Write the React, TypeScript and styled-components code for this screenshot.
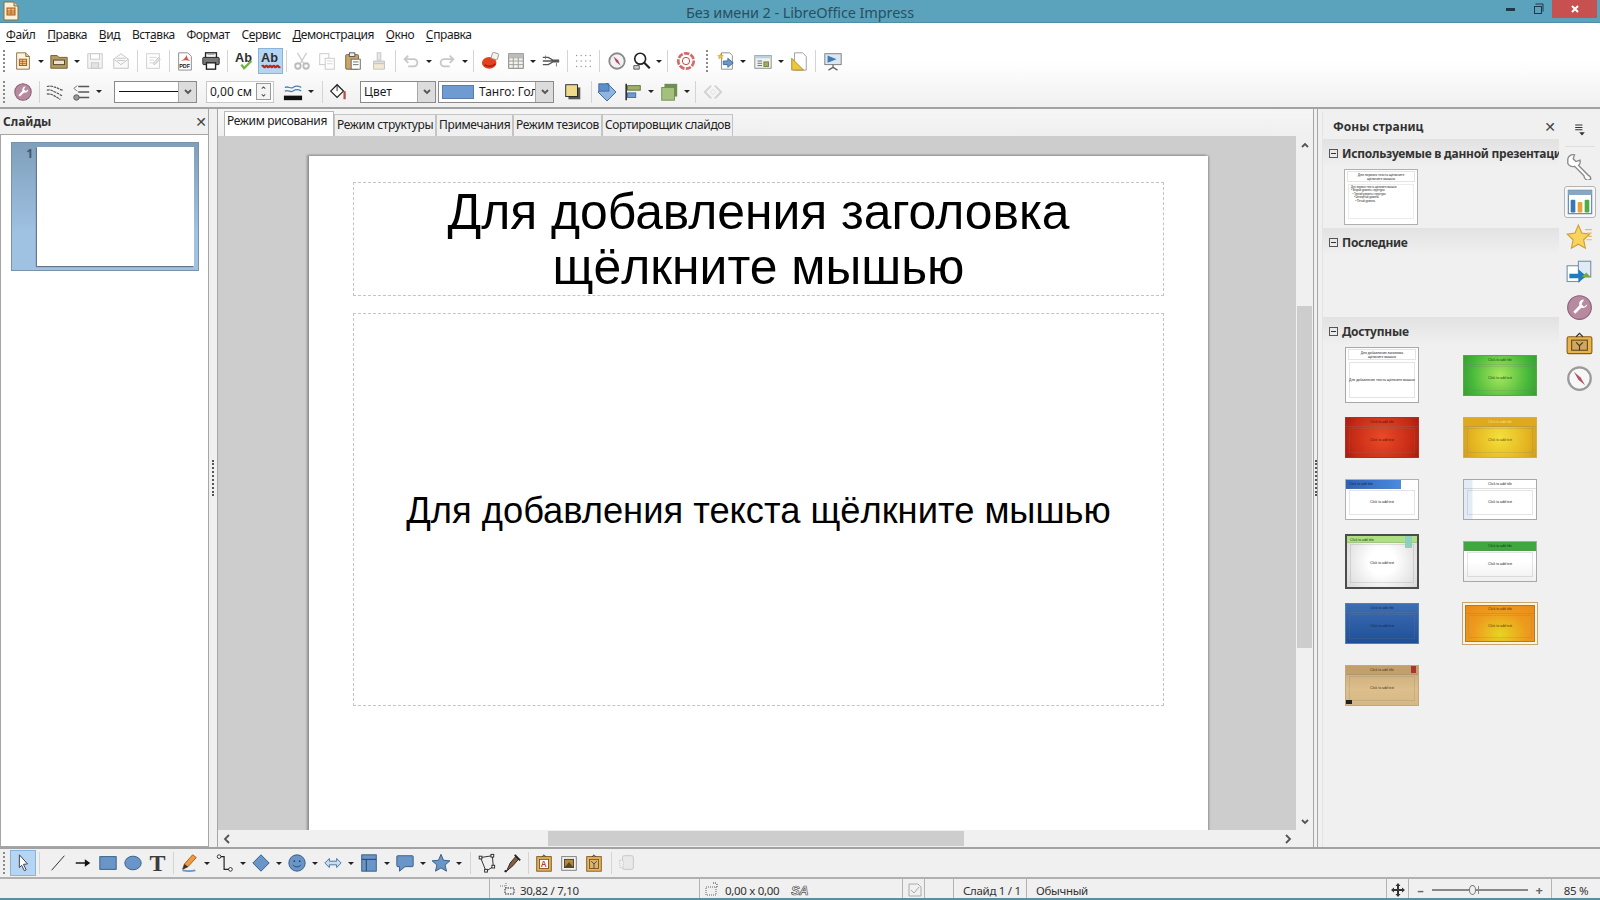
import React from "react";
import styled, { createGlobalStyle } from "styled-components";

const Global = createGlobalStyle`
  html, body { margin: 0; padding: 0; background: #f0f0f0; }
  #root { width: 1600px; height: 900px; overflow: hidden; }
  * { box-sizing: border-box; }
`;

const UI = `"Noto Sans", "Open Sans", "Liberation Sans", sans-serif`;

const Window = styled.div`
  width: 1600px; height: 900px; display: flex; flex-direction: column;
  font-family: ${UI}; font-size: 12px; color: #1c1c1c; background: #f0f0f0;
  border-bottom: 2px solid #5a8ea3;
`;
const TitleBar = styled.div`
  height: 23px; flex: none; background: #5ba3bd; border-bottom: 1px solid #4d8ea6;
  display: flex; align-items: flex-start; justify-content: space-between; position: relative;
`;
const AppIcon = styled.div` width: 22px; height: 22px; padding: 1px 0 0 1px; `;
const WindowTitle = styled.div`
  position: absolute; left: 0; right: 0; top: 2px; text-align: center;
  font-size: 14.5px; line-height: 20px; color: #28505f; letter-spacing: -0.1px;
`;
const WinButtons = styled.div` display: flex; align-items: flex-start; `;
const WinBtn = styled.div<{ $w: number; $close?: boolean }>`
  width: ${p => p.$w}px; height: 18px; display: flex; align-items: center; justify-content: center;
  background: ${p => (p.$close ? "#c75050" : "transparent")}; margin-right: ${p => (p.$close ? 3 : 0)}px;
`;
const Chrome = styled.div`
  flex: none; height: 86px; background: linear-gradient(#fff 0%, #fff 45%, #f0f0f0 100%);
  border-bottom: 2px solid #a2a2a2;
`;
const MenuBar = styled.div` height: 23px; display: flex; align-items: center; padding-left: 6px; gap: 11.75px; font-size: 12px; `;
const MenuItem = styled.span` white-space: nowrap; letter-spacing: -0.4px; `;
const MenuKey = styled.span` text-decoration: underline; text-underline-offset: 2px; `;
const ToolRow = styled.div<{ $h?: number }>` height: ${p => p.$h ?? 30}px; display: flex; align-items: center; `;
const Grip = styled.div`
  width: 10px; height: 22px; flex: none; display: flex; justify-content: flex-start; padding-left: 3px;
  &::before { content: ""; height: 100%; border-left: 2px dotted #8a8a8a; }
`;
const Tool = styled.div<{ $w?: number; $on?: boolean }>`
  width: ${p => p.$w ?? 26}px; height: 26px; flex: none; display: flex; align-items: center; justify-content: center;
  ${p => p.$on && "background: #b5d5f2; border: 1px solid #86b4dc;"}
`;
const ArrowCell = styled.div`
  width: 10px; flex: none; display: flex; justify-content: center;
  &::before { content: ""; border-left: 3px solid transparent; border-right: 3px solid transparent; border-top: 3px solid #222; }
`;
const SepLine = styled.div`
  width: 6px; height: 22px; flex: none; display: flex; justify-content: center;
  &::before { content: ""; border-left: 1px solid #d4d4d4; }
`;
const Gap = styled.div<{ $w: number }>` width: ${p => p.$w}px; flex: none; `;
const Combo = styled.div<{ $w: number }>`
  width: ${p => p.$w}px; height: 22px; flex: none; background: #fff; border: 1px solid #8a8a8a;
  display: flex; align-items: center; overflow: hidden;
`;
const ComboValue = styled.div`
  flex: 1; min-width: 0; padding-left: 3px; font-size: 12px; white-space: nowrap; overflow: hidden; display: flex; align-items: center; gap: 5px;
`;
const LineSample = styled.div` flex: 1; height: 1px; background: #111; margin-left: 1px; `;
const Swatch = styled.div` width: 32px; height: 14px; background: #6f9bd3; border: 1px solid #5a7ca8; flex: none; `;
const ComboBtn = styled.div`
  width: 18px; height: 100%; flex: none; background: #dcdcdc; border-left: 1px solid #a8a8a8;
  display: flex; align-items: center; justify-content: center;
`;
const SpinBox = styled(Combo)` background: #fff; border-color: #c8c8c8; `;
const SpinBtns = styled.div`
  width: 15px; height: 17px; border: 1px solid #9a9a9a; margin-right: 2px; flex: none;
  display: flex; flex-direction: column; align-items: center; justify-content: space-around; background: #f4f4f4;
`;

const Main = styled.div` flex: 1; min-height: 0; display: flex; border-bottom: 2px solid #a2a2a2; `;
const SlidesPanel = styled.div` width: 208px; flex: none; display: flex; flex-direction: column; background: #f0f0f0; `;
const PanelHead = styled.div`
  height: 25px; flex: none; display: flex; align-items: center; justify-content: space-between; padding: 0 1px 0 3px;
  font-weight: 700; font-size: 12px; color: #333;
`;
const CloseX = styled.span` font-size: 14px; font-weight: 700; color: #444; line-height: 1; font-family: "DejaVu Sans", sans-serif; `;
const SlideList = styled.div`
  flex: 1; background: #fff; border: 1px solid #a6a6a6; border-right: none; padding: 7px 0 0 10px;
`;
const SlideCard = styled.div`
  width: 188px; height: 129px; display: flex; padding: 4px 4px 4px 0; border: 1px solid #7b93a9;
  background: linear-gradient(#7f9fbb, #9fc1e2 70%);
`;
const SlideNum = styled.div` width: 25px; flex: none; text-align: right; padding-right: 4px; font-weight: 700; color: #44586a; line-height: 14px; `;
const SlidePreview = styled.div` flex: 1; background: #fff; box-shadow: -1px 1px 1px #65788a; `;
const Splitter = styled.div<{ $w: number }>`
  width: ${p => p.$w}px; flex: none; display: flex; align-items: center; justify-content: center;
  background: #f0f0f0; border-left: 1px solid #a6a6a6; border-right: 1px solid #a6a6a6;
`;
const SplitDots = styled.div` height: 36px; border-left: 2px dotted #555; `;
const Workspace = styled.div` flex: 1; min-width: 0; display: flex; flex-direction: column; `;
const TabBar = styled.div` height: 27px; flex: none; display: flex; align-items: flex-end; padding-left: 6px; background: linear-gradient(#f6f6f6, #efefef); `;
const Tab = styled.div<{ $w: number; $on?: boolean }>`
  width: ${p => p.$w}px; height: ${p => (p.$on ? 25 : 22)}px; flex: none; text-align: left; padding-left: 2px; white-space: nowrap; overflow: hidden;
  font-size: 12px; letter-spacing: -0.35px; line-height: ${p => (p.$on ? 18 : 20)}px; color: #222;
  background: ${p => (p.$on ? "#fff" : "#f0f0f0")};
  border: 1px solid ${p => (p.$on ? "#b8b8b8" : "#c4c4c4")}; border-bottom: none;
`;
const WorkRow = styled.div` flex: 1; min-height: 0; display: flex; `;
const Canvas = styled.div` flex: 1; min-width: 0; background: #cdcdcd; padding: 20px 0 0 91px; overflow: hidden; `;
const Slide = styled.div`
  width: 899px; height: 700px; background: #fff; box-shadow: -2px -1px 2px #8e8e8e, 1px 0 2px #8e8e8e;
  padding: 26px 44px 0; display: flex; flex-direction: column; gap: 17px;
`;
const TitleHolder = styled.div`
  height: 114px; flex: none; border: 1px dashed #c4c4c4; font-family: "Liberation Sans", Arial, sans-serif; font-size: 49.8px;
  line-height: 55px; text-align: center; color: #000; padding-top: 2px; white-space: nowrap;
`;
const BodyHolder = styled.div`
  height: 393px; flex: none; border: 1px dashed #c4c4c4; font-family: "Liberation Sans", Arial, sans-serif; font-size: 36.3px;
  padding-top: 2px; display: flex; align-items: center; justify-content: center; color: #000; white-space: nowrap;
`;
const VScroll = styled.div` width: 17px; flex: none; background: #f0f0f0; display: flex; flex-direction: column; align-items: center; padding-top: 3px; `;
const VThumb = styled.div` width: 15px; height: 342px; flex: none; background: #cdcdcd; margin-top: 155px; `;
const VBottom = styled.div` margin-top: auto; padding-bottom: 2px; display: flex; `;
const HScrollRow = styled.div` height: 17px; flex: none; display: flex; align-items: center; background: #f0f0f0; padding-left: 3px; `;
const HThumb = styled.div` width: 416px; height: 15px; background: #cdcdcd; margin-left: 315px; `;
const HRight = styled.div` margin-left: 318px; display: flex; `;

const TaskPanel = styled.div` width: 237px; flex: none; margin-top: 3px; display: flex; flex-direction: column; background: #f0f0f0; border-left: 1px solid #e4e4e4; overflow: hidden; `;
const TaskHead = styled.div` height: 27px; flex: none; display: flex; align-items: center; justify-content: space-between; padding: 2px 3px 0 10px; font-weight: 700; color: #333; `;
const SectionHead = styled.div`
  height: 28px; flex: none; display: flex; align-items: center; gap: 4px; padding-left: 6px;
  font-weight: 700; font-size: 12px; color: #333; white-space: nowrap; letter-spacing: -0.25px;
  background: linear-gradient(#e2e2e2, #f0f0f0);
`;
const MinusBox = styled.span`
  width: 9px; height: 9px; flex: none; border: 1px solid #555; display: flex; align-items: center; justify-content: center;
  &::before { content: ""; width: 5px; height: 1px; background: #333; }
`;
const SectionBody = styled.div<{ $h: number }>` height: ${p => p.$h}px; flex: none; `;
const ThumbGrid = styled.div`
  display: grid; grid-template-columns: 74px 74px; column-gap: 44px; grid-auto-rows: 62px; align-items: center;
  padding-left: 22px; margin-top: -1px;
`;
const Mini = styled.div<{ $h?: number; $bg: string; $edge?: string; $color?: string; $frame?: string; $ring?: string }>`
  width: 74px; height: ${p => p.$h ?? 41}px; background: ${p => p.$bg}; border: ${p => p.$frame ?? `1px solid ${p.$edge ?? "#a8a8a8"}`};
  color: ${p => p.$color ?? "#222"}; display: flex; flex-direction: column; overflow: hidden; position: relative;
  ${p => p.$ring && `box-shadow: inset 0 0 0 1px ${p.$ring}, 0 0 0 1px #c9a56e;`}
  font-family: "Liberation Sans", sans-serif; font-size: 3.4px; line-height: 4px; text-align: center;
`;
const MiniTitle = styled.div<{ $bg?: string; $w?: string; $left?: boolean; $color?: string; $h?: number }>`
  flex: none; width: ${p => p.$w ?? "100%"}; height: ${p => p.$h ?? 9}px; background: ${p => p.$bg ?? "transparent"};
  color: ${p => p.$color ?? "inherit"}; text-align: ${p => (p.$left ? "left" : "center")}; padding: 2px ${p => (p.$left ? "3px" : "0")} 0;
  overflow: hidden; border-bottom: 1px solid rgba(120,120,120,.25); white-space: nowrap;
`;
const MiniBody = styled.div`
  flex: 1; display: flex; align-items: center; justify-content: center; margin: 1px 3px 4px; white-space: nowrap;
  border: 1px solid rgba(120,120,120,.2);
`;
const MiniList = styled.div` flex: 1; margin: 1px 3px 5px; border: 1px solid rgba(120,120,120,.14); text-align: left; padding: 1px 2px; font-size: 2.6px; line-height: 3.4px; `;
const SmallTitle = styled.div` flex: none; height: 11px; padding-top: 1px; white-space: pre-line; line-height: 4px; border: 1px solid rgba(120,120,120,.2); margin: 1px 2px 1px; `;
const UsedRow = styled.div` padding: 2px 0 0 21px; `;
const MiniMark = styled.div<{ $c: string; $w: number; $h: number; $r?: number; $b?: number; $l?: number; $t?: number }>`
  position: absolute; width: ${p => p.$w}px; height: ${p => p.$h}px; background: ${p => p.$c};
  ${p => p.$r !== undefined && `right: ${p.$r}px;`} ${p => p.$l !== undefined && `left: ${p.$l}px;`}
  ${p => p.$t !== undefined && `top: ${p.$t}px;`} ${p => p.$b !== undefined && `bottom: ${p.$b}px;`}
`;

const SideTabs = styled.div` width: 41px; flex: none; display: flex; flex-direction: column; align-items: center; margin-top: 3px; background: #f0f0f0; `;
const SideTop = styled.div` height: 35px; width: 30px; flex: none; display: flex; align-items: center; justify-content: center; border-bottom: 1px solid #dedede; `;
const SideTab = styled.div<{ $on?: boolean }>`
  width: 32px; height: 32px; margin-top: 3.4px; flex: none; display: flex; align-items: center; justify-content: center;
  ${p => p.$on && "background: #f8f8f8; border: 1px solid #b4b4b4; border-radius: 3px;"}
`;

const BottomBar = styled.div` height: 30px; flex: none; display: flex; align-items: center; background: #f0f0f0; border-bottom: 2px solid #b0b0b0; `;
const StatusBar = styled.div` height: 19px; flex: none; display: flex; align-items: stretch; font-size: 11.5px; letter-spacing: -0.3px; color: #333; background: #f0f0f0; `;
const StatusCell = styled.div<{ $w: number; $c?: boolean; $line?: boolean; $pad?: number }>`
  width: ${p => p.$w}px; flex: none; display: flex; align-items: center; gap: 5px; white-space: nowrap; padding-top: 3px;
  padding-left: ${p => (p.$c ? 0 : p.$pad ?? 9)}px; justify-content: ${p => (p.$c ? "center" : "flex-start")};
  border-right: ${p => (p.$line === false ? "none" : "1px solid #b4b4b4")};
`;
const ZoomTrack = styled.div` width: 96px; height: 2px; background: #888; position: relative; margin: 0 3px; `;
const ZoomKnob = styled.div`
  position: absolute; left: 37px; top: -4px; width: 7px; height: 10px; border-radius: 50%; background: #f0f0f0; border: 1px solid #777;
`;
const ZoomTick = styled.div` position: absolute; left: 46px; top: -3px; width: 1px; height: 8px; background: #888; `;
const ZoomSign = styled.span` color: #666; font-size: 13px; line-height: 1; font-weight: 700; `;

const Svg: React.FC<{ s?: number; vb?: number; dim?: boolean; children: React.ReactNode }> = ({ s = 22, vb = 22, dim, children }) => (
  <svg width={s} height={s} viewBox={`0 0 ${vb} ${vb}`} opacity={dim ? 0.32 : 1} fill="none">{children}</svg>
);

const txt = { fontFamily: "Liberation Sans, sans-serif", fontWeight: 700 } as const;

const P: Record<string, React.ReactNode> = {
  newdoc: <><path d="M4 2h10l4 4v14H4z" fill="#fdf4e2" stroke="#8a6a3c" /><path d="M14 2v4h4" fill="#e6cfa2" stroke="#8a6a3c" /><rect x="7" y="9" width="8" height="7" fill="#f3c27a" stroke="#a4561c" /><path d="M7 11.5h8M7 13.8h8M10.5 9v7" stroke="#a4561c" strokeWidth=".7" /></>,
  open: <><path d="M2 5h7l2 2h9v12H2z" fill="#b59a62" stroke="#6f5a2e" /><rect x="5" y="10" width="12" height="5" fill="#ece3cc" stroke="#4f4224" /></>,
  save: <><path d="M3 3h16v16H3z" fill="#dfdfdf" stroke="#555" /><rect x="6" y="3" width="10" height="6" fill="#fff" stroke="#555" /><rect x="7" y="13" width="8" height="6" fill="#aaa" stroke="#555" /></>,
  mail: <><path d="M3 9l8-6 8 6v10H3z" fill="#f1f1f1" stroke="#444" /><path d="M3 9l8 6 8-6M6 8h10M7 10.5h8" stroke="#444" /></>,
  edit: <><rect x="4" y="3" width="14" height="16" fill="#fff" stroke="#666" /><path d="M7 7h8M7 10h5M7 13h4" stroke="#777" /><path d="M11 14l6-7 2 2-6 6z" fill="#aaa" stroke="#555" /></>,
  pdf: <><path d="M4 2h10l4 4v15H4z" fill="#fff" stroke="#888" /><path d="M6 11c3-1 5-3 7-7 0 3 1 5 4 7-4-1-7-1-11 0z" fill="#d4574a" /><text x="4.6" y="19" fontSize="6" fill="#222" style={txt}>PDF</text></>,
  print: <><rect x="5" y="2" width="12" height="6" fill="#fff" stroke="#222" strokeWidth="1.5" /><rect x="2" y="7" width="18" height="8" rx="1" fill="#777" stroke="#222" /><rect x="6" y="13" width="10" height="7" fill="#fff" stroke="#222" strokeWidth="1.5" /><path d="M7 4h8" stroke="#999" /></>,
  spell: <><text x="0" y="12.5" fontSize="14" fill="#2f2f2f" style={txt}>Ab</text><path d="M7 15l3 4 8-8" stroke="#6cb83a" strokeWidth="2.6" /></>,
  auto: <><text x="0" y="12.5" fontSize="14" fill="#2f2f2f" style={txt}>Ab</text><path d="M1 17c2-2.5 2 2.5 4 0s2 2.5 4 0 2 2.5 4 0 2 2.5 4 0 2 2.5 4 0" stroke="#c0241c" strokeWidth="2.4" /></>,
  cut: <><path d="M6 2l7 12M16 2L9 14" stroke="#666" strokeWidth="1.5" /><circle cx="6.5" cy="16.5" r="3" stroke="#333" strokeWidth="2" /><circle cx="15.5" cy="16.5" r="3" stroke="#333" strokeWidth="2" /></>,
  copy: <><rect x="3" y="3" width="10" height="12" fill="#fff" stroke="#555" /><rect x="9" y="8" width="10" height="12" fill="#fff" stroke="#555" /><path d="M11 11h6M11 14h6" stroke="#777" /></>,
  paste: <><rect x="3" y="4" width="14" height="16" rx="1" fill="#c9a56b" stroke="#7a5c2c" /><rect x="7" y="2" width="6" height="4" fill="#eee" stroke="#555" /><rect x="9" y="9" width="10" height="11" fill="#fff" stroke="#666" /><path d="M11 12h6M11 15h6" stroke="#666" /></>,
  brush: <><rect x="9" y="2" width="4" height="8" fill="#bbb" stroke="#444" /><path d="M5 11h12v3H5z" fill="#999" stroke="#444" /><path d="M5 14h12v6H5z" fill="#e0c27a" stroke="#444" /></>,
  undo: <><path d="M4 9h10a4 4 0 0 1 0 8H8" stroke="#555" strokeWidth="2" /><path d="M8 5L4 9l4 4" stroke="#555" strokeWidth="2" /></>,
  redo: <><path d="M18 9H8a4 4 0 0 0 0 8h6" stroke="#555" strokeWidth="2" /><path d="M14 5l4 4-4 4" stroke="#555" strokeWidth="2" /></>,
  chart: <><ellipse cx="9" cy="13" rx="8" ry="6.5" fill="#e2401f" /><path d="M4 15c4 3 9 2 12-1" stroke="#a81e10" strokeWidth="1.5" /><rect x="12" y="2" width="7" height="7" rx="1" transform="rotate(15 15 5)" fill="#f7f3e8" stroke="#999" /></>,
  table: <><rect x="3" y="3" width="16" height="16" fill="#f5f2ea" stroke="#777" /><path d="M3 7.5h16M3 11h16M3 15h16M8 3v16M13.5 3v16" stroke="#999" /><rect x="3" y="3" width="16" height="4" fill="#bcbcbc" /></>,
  conn: <><path d="M2 7h6l5 3h7M2 15h6l5-3h7M2 11h18" stroke="#555" strokeWidth="1.4" /><path d="M5 5v4M17 13v4" stroke="#777" /></>,
  grid: <g fill="#999"><circle cx="4" cy="5" r=".8" /><circle cx="9" cy="5" r=".8" /><circle cx="14" cy="5" r=".8" /><circle cx="19" cy="5" r=".8" /><circle cx="4" cy="11" r=".8" /><circle cx="9" cy="11" r=".8" /><circle cx="14" cy="11" r=".8" /><circle cx="19" cy="11" r=".8" /><circle cx="4" cy="17" r=".8" /><circle cx="9" cy="17" r=".8" /><circle cx="14" cy="17" r=".8" /><circle cx="19" cy="17" r=".8" /></g>,
  nav: <><circle cx="11" cy="11" r="8.5" fill="#f2f2f2" stroke="#8a8a8a" strokeWidth="2" /><path d="M7 6l5 4 3 6-5-4z" fill="#b04a60" /></>,
  zoom: <><circle cx="9" cy="8.5" r="6" fill="#fff" stroke="#222" strokeWidth="1.8" /><path d="M13.5 13l6 6" stroke="#222" strokeWidth="2.4" /><path d="M2 16h6v4H2z" fill="#ccc" stroke="#555" /></>,
  help: <><circle cx="11" cy="11" r="8.5" fill="#fff" stroke="#d36a68" strokeWidth="3" strokeDasharray="6 1.5" /><circle cx="11" cy="11" r="4" fill="#fff" stroke="#b03838" /></>,
  gallery: <><path d="M6 2h9l3 3v15H6z" fill="#fff" stroke="#888" /><path d="M2 5l2 0 1-2 1 2 2 0-1.5 1.5.5 2-2-1-2 1 .5-2z" fill="#f2c72f" stroke="#b79020" strokeWidth=".5" /><path d="M8 11h5V8l6 5-6 5v-3H8z" fill="#6e97c8" stroke="#3c6a9c" /></>,
  master: <><rect x="2" y="5" width="18" height="14" fill="#f1f1f1" stroke="#888" /><rect x="2" y="5" width="18" height="3" fill="#bcd0df" /><path d="M5 11h5M5 13.5h5M5 16h5" stroke="#567" /><rect x="12" y="12" width="5" height="5" fill="#9cb063" stroke="#6c7f3c" /></>,
  layout: <><path d="M6 2h9l4 4v15H6z" fill="#fff" stroke="#999" /><path d="M3 21V8l13 13z" fill="#eec73c" stroke="#a98a24" /></>,
  present: <><rect x="2" y="3" width="18" height="12" fill="#dce7f2" stroke="#777" /><path d="M5 5l10 4-10 4z" fill="#3e7bb3" /><path d="M11 15v3M6 21l5-3 5 3" stroke="#666" strokeWidth="1.4" /></>,
  props: <><circle cx="11" cy="11" r="9" fill="#b78aa0" stroke="#8a6079" strokeWidth="1.2" /><path d="M14 5a3.5 3.5 0 0 0-3.6 4.7L6 14.5 7.5 16l4.7-4.4A3.5 3.5 0 0 0 16.8 8L14 10l-2-2z" fill="#fff" /></>,
  lstyle: <><path d="M2 5c5-1 7 0 10 1s5 3 8 3M2 9c5-1 6 1 9 2s5 3 8 4M2 13c4 0 6 1 8 2s4 3 7 4" stroke="#555" strokeWidth="1.3" strokeDasharray="3 .8" /></>,
  lwidth: <><path d="M8 5h12M8 11h12M8 17h12" stroke="#555" strokeWidth="1.6" /><path d="M7 4l-4 3 4 3" stroke="#777" /><circle cx="6" cy="17" r="3" fill="#999" stroke="#555" /></>,
  lcolor: <><path d="M2 6c4-2 6 2 9 0s6-2 9 0M2 10c4-2 6 2 9 0s6-2 9 0" stroke="#4d7fb3" strokeWidth="1.4" /><rect x="1" y="15" width="20" height="5" fill="#111" /></>,
  fill: <><path d="M3 10l7-7 7 7-7 7z" fill="#fff" stroke="#222" strokeWidth="1.4" /><path d="M10 3V10" stroke="#222" /><path d="M17 11v8h2.5v-8c0-1-1-2-2.5 0z" fill="#b3523a" /></>,
  shadow: <><rect x="6" y="6" width="13" height="13" fill="#555" /><rect x="3" y="3" width="13" height="13" fill="#efd98a" stroke="#222" /></>,
  rotate: <><rect x="4" y="4" width="14" height="14" transform="rotate(45 11 11)" fill="#8fb4e0" stroke="#3d6b9e" /><rect x="2" y="2" width="11" height="8" fill="#5f8fcb" stroke="#3d6b9e" /></>,
  align: <><path d="M3.5 2v18" stroke="#333" strokeWidth="1.8" /><rect x="5" y="4" width="14" height="5" fill="#9db067" stroke="#5e7136" /><rect x="5" y="12" width="9" height="5" fill="#6f9bd3" stroke="#3d6b9e" /></>,
  arrange: <><rect x="6" y="2" width="14" height="14" fill="#6e8e52" /><rect x="3" y="6" width="14" height="14" fill="#a4c07c" stroke="#6e8e52" /></>,
  diamonds: <><path d="M9 4l-7 7 7 7M13 4l7 7-7 7" stroke="#888" strokeWidth="2" /><path d="M11 8l3 3-3 3-3-3z" stroke="#aaa" /></>,
  select: <><path d="M7 2l9 10-4.5.5 3 6-2 1-3-6L7 16z" fill="#fff" stroke="#445" strokeWidth="1.1" /></>,
  line: <path d="M4 19L18 3" stroke="#333" strokeWidth="1.1" />,
  arrow: <><path d="M3 11h12" stroke="#111" strokeWidth="1.6" /><path d="M13 7l6 4-6 4z" fill="#111" /></>,
  rect: <rect x="2" y="4" width="18" height="14" fill="#6a95c8" stroke="#32597f" />,
  ellipse: <ellipse cx="11" cy="11" rx="9" ry="7.5" fill="#6a95c8" stroke="#32597f" />,
  pen: <><path d="M4 19c4 1 10 1 14 0" stroke="#6a95c8" strokeWidth="2" /><path d="M4 18l2-6 9-10 4 3-9 10z" fill="#ec9a44" stroke="#a55a1c" /><path d="M4 18l2-6 4 3z" fill="#333" /></>,
  connector: <><circle cx="4.5" cy="4" r="2" fill="#fff" stroke="#222" /><circle cx="17" cy="18" r="2" fill="#fff" stroke="#222" /><path d="M6.5 4H10v14h5" stroke="#222" strokeWidth="1.3" /></>,
  diamond: <path d="M11 2l9 9-9 9-9-9z" fill="#6a95c8" stroke="#32597f" />,
  smile: <><circle cx="11" cy="11" r="9" fill="#6a95c8" stroke="#32597f" /><circle cx="8" cy="9" r="1" fill="#24486d" /><circle cx="14" cy="9" r="1" fill="#24486d" /><path d="M6.5 13c2 3 7 3 9 0" stroke="#24486d" /></>,
  dbl: <path d="M2 11l5-5v3h8V6l5 5-5 5v-3H7v3z" fill="#c9dcf2" stroke="#3f6e9e" />,
  flow: <><rect x="3" y="2" width="16" height="18" fill="#6a95c8" stroke="#32597f" /><path d="M3 7h16M8 7v13" stroke="#1e3f60" /></>,
  callout: <path d="M3 3h16a1 1 0 0 1 1 1v10a1 1 0 0 1-1 1H11l-6 5v-5H3a1 1 0 0 1-1-1V4a1 1 0 0 1 1-1z" fill="#6a95c8" stroke="#32597f" />,
  star: <path d="M11 1.5l2.8 6.5 7 .6-5.3 4.6 1.6 6.8L11 16.4 4.9 20l1.6-6.8L1.2 8.6l7-.6z" fill="#6a95c8" stroke="#32597f" />,
  points: <><path d="M5 5l13-2 1 12-8 5z" stroke="#222" /><rect x="3.5" y="3.5" width="3" height="3" fill="#fff" stroke="#222" /><rect x="16.5" y="1.5" width="3" height="3" fill="#fff" stroke="#222" /><rect x="17.5" y="13.5" width="3" height="3" fill="#fff" stroke="#222" /><rect x="9.5" y="18" width="3" height="3" fill="#fff" stroke="#222" /></>,
  glue: <><path d="M5 20l4-9 6-7 3 3-6 7z" fill="#8a5b3c" stroke="#222" /><path d="M14 2l6 6" stroke="#222" strokeWidth="2" /><circle cx="4" cy="20" r="1.3" fill="#222" /></>,
  fontwork: <><rect x="3" y="4" width="16" height="16" fill="#e5b15a" stroke="#7a5320" /><rect x="6" y="7" width="10" height="10" fill="#fff" stroke="#7a5320" /><text x="7.5" y="15.5" fontSize="9" fill="#c33" style={txt}>A</text><path d="M9 4l2-2 2 2" stroke="#333" /></>,
  fromfile: <><rect x="3" y="4" width="16" height="15" fill="#f5f5f5" stroke="#777" /><rect x="6" y="7" width="10" height="9" fill="#b08c3c" stroke="#533" /><path d="M6 16l5-6 5 6" fill="#5c4a22" /></>,
  gal2: <><rect x="3" y="4" width="16" height="16" fill="#e8b75e" stroke="#7a5320" /><rect x="6" y="7" width="10" height="10" fill="#d8b470" stroke="#7a5320" /><path d="M11 17v-6M8 9l3 3 3-3" stroke="#5a4420" /><path d="M9 4l2-2 2 2" stroke="#333" /></>,
  extrude: <><rect x="6" y="3" width="12" height="15" rx="2" fill="#ddd" stroke="#666" /><path d="M3 8h4v8H3z" fill="#eee" stroke="#777" strokeDasharray="1.5 1" /></>,
  menu: <><path d="M4 5h9M4 8h9M4 11h9" stroke="#333" strokeWidth="1.3" /><path d="M9 14h7l-3.5 4z" fill="#333" /></>,
  wrench: <path transform="translate(-2 -2) scale(1.2)" d="M3 6a4 4 0 0 1 5-3L7 6l2 2 3-1a4 4 0 0 1-1 4l7 7a3 3 0 0 1 2 3 3 3 0 0 1-3 .5 3 3 0 0 1-2-3l-7-7a4 4 0 0 1-5-2z" fill="#fff" stroke="#8a8a8a" strokeWidth="1" />,
  chartside: <><rect x="2" y="2" width="20" height="20" fill="#fff" stroke="#5d87a8" /><rect x="2" y="2" width="20" height="4" fill="#89a8c0" /><rect x="4" y="10" width="4" height="11" rx="1" fill="#3a78b5" /><rect x="10" y="12" width="4" height="9" rx="1" fill="#eaa23a" /><rect x="16" y="10" width="4" height="11" rx="1" fill="#4eae45" /></>,
  starside: <><path d="M11 1l3 7 7 1-5.3 5 1.5 7.5L11 18l-6.2 3.5L6.3 14 1 9l7-1z" fill="#f8d35d" stroke="#cf9e35" /><path d="M17 5h6M19 8h4M19 11h4M18 14h5" stroke="#eab767" /></>,
  nav2: <><rect x="1" y="6" width="11" height="14" fill="#fff" stroke="#7993ad" /><rect x="11" y="2" width="11" height="14" fill="#dfeaf4" stroke="#7993ad" /><path d="M3 13h8V9l7 6-7 6v-4H3z" fill="#1f7cc0" /><path d="M14 16l4-4 4 4z" fill="#7ca83f" /></>,
  propside: <><circle cx="12" cy="12" r="10.5" fill="#b78aa0" stroke="#8a6079" /><path d="M16 5a4 4 0 0 0-4.2 5.3L6.5 15.8 8.2 17.5l5.5-5.3A4 4 0 0 0 19 9l-3 2.3-2.3-2.3z" fill="#fff" /></>,
  galside: <><rect x="1" y="6" width="22" height="15" rx="1.5" fill="#e8b349" stroke="#8a5d18" /><rect x="5" y="9" width="14" height="9" fill="#cfa75e" stroke="#6a4c1e" /><path d="M12 18v-5M9 11l3 3 3-3" stroke="#4a3818" /><path d="M9 6l3-3 3 3" stroke="#333" /></>,
  navside: <><circle cx="12" cy="12" r="10" fill="#f7f7f7" stroke="#9a9a9a" strokeWidth="2" /><path d="M7 6l6 5 4 7-6-5z" fill="#b05468" /></>,
  app: <><path d="M3 1h10l4 4v14H3z" fill="#fdf0d8" stroke="#8a6a3c" /><path d="M13 1v4h4" fill="#e6cfa2" stroke="#8a6a3c" /><rect x="6" y="7" width="8" height="7" fill="#f2bb6a" stroke="#a4561c" /><path d="M6 10h8M6 12h8M10 7v7" stroke="#a4561c" strokeWidth=".7" /></>,
  chevDown: <path d="M3 4l3 3 3-3" stroke="#555" strokeWidth="1.8" />,
  chevUp: <path d="M3 8l3-3 3 3" stroke="#555" strokeWidth="1.8" />,
  chevLeft: <path d="M8 2L4 6l4 4" stroke="#555" strokeWidth="1.8" />,
  chevRight: <path d="M4 2l4 4-4 4" stroke="#555" strokeWidth="1.8" />,
  posIcon: <><path d="M7 1v6M1 4h6" stroke="#777" strokeDasharray="1 1" /><rect x="6" y="6" width="9" height="6" stroke="#222" strokeDasharray="1.5 1" /></>,
  sizeIcon: <><rect x="2" y="5" width="10" height="8" stroke="#666" strokeDasharray="1 1" /><path d="M9 1h3M13 2v3" stroke="#333" strokeDasharray="1 1" /></>,
  checkDoc: <><path d="M3 2h9l3 3v9H3z" stroke="#aaa" /><path d="M5 8l3 3 5-6" stroke="#aaa" /></>,
  move: <path d="M8 1l2.5 3H9v3h3V5.5L15 8l-3 2.5V9H9v3h1.5L8 15l-2.5-3H7V9H4v1.5L1 8l3-2.5V7h3V4H5.5z" fill="#333" />,
  winMin: <rect x="0" y="5" width="9" height="3" fill="#1d3a46" />,
  winMax: <><rect x="2.5" y="3.5" width="7" height="7" stroke="#1d3a46" /><path d="M3.5 1h7.5v7.5" stroke="#1d3a46" /></>,
  winClose: <path d="M3 3l6 6M9 3l-6 6" stroke="#fff" strokeWidth="2" />,
};

const T: React.FC<{ i: string; dim?: boolean; on?: boolean; w?: number; s?: number }> = ({ i, dim, on, w, s = 20 }) => (
  <Tool $on={on} $w={w}><Svg s={s} dim={dim}>{P[i]}</Svg></Tool>
);
const Small: React.FC<{ i: string; s?: number }> = ({ i, s = 12 }) => <Svg s={s} vb={12}>{P[i]}</Svg>;
const Status: React.FC<{ i: string }> = ({ i }) => <Svg s={16} vb={16}>{P[i]}</Svg>;
const Side: React.FC<{ i: string; on?: boolean }> = ({ i, on }) => <SideTab $on={on}><Svg s={on ? 28 : 27} vb={24}>{P[i]}</Svg></SideTab>;
const A = ArrowCell;
const S = SepLine;

const BigT = styled.span` font-family: "Liberation Serif", serif; font-weight: 700; font-size: 24px; line-height: 1; color: #3c3c3c; `;

const Menu = [
  ["", "Ф", "айл"], ["", "П", "равка"], ["", "В", "ид"], ["Вст", "а", "вка"], ["Фо", "р", "мат"],
  ["С", "е", "рвис"], ["", "Д", "емонстрация"], ["", "О", "кно"], ["", "С", "правка"],
];

const themes = {
  green: "radial-gradient(circle, #a8e85c 0%, #46b83a 70%, #36a032 100%)",
  red: "radial-gradient(circle, #ea4a28 0%, #c52a14 75%, #a91c10 100%)",
  yellow: "radial-gradient(circle, #f4e03c 0%, #e4b320 70%, #cf9c22 100%)",
  grey: "radial-gradient(circle, #fff 30%, #d8d8d8 100%)",
  blue: "linear-gradient(#3d6eb4, #1f4f96)",
  orange: "radial-gradient(ellipse at 50% 80%, #e5d522 0%, #ee9a1e 55%, #e88a16 100%)",
  tan: "linear-gradient(#c9a875, #dcbf8d 60%, #d6b783)",
};

export default function App() {
  return (
    <Window>
      <Global />
      <TitleBar>
        <AppIcon><Svg s={20} vb={20}>{P.app}</Svg></AppIcon>
        <WindowTitle>Без имени 2 - LibreOffice Impress</WindowTitle>
        <WinButtons>
          <WinBtn $w={24}><Small i="winMin" /></WinBtn>
          <WinBtn $w={28}><Small i="winMax" /></WinBtn>
          <WinBtn $w={45} $close><Small i="winClose" /></WinBtn>
        </WinButtons>
      </TitleBar>
      <Chrome>
        <MenuBar>
          {Menu.map(([a, k, b]) => (
            <MenuItem key={a + k + b}>{a}<MenuKey>{k}</MenuKey>{b}</MenuItem>
          ))}
        </MenuBar>
        <ToolRow>
          <Grip />
          <T i="newdoc" /><A /><T i="open" /><A /><T i="save" dim /><T i="mail" dim /><S /><T i="edit" dim /><S />
          <T i="pdf" /><T i="print" /><S /><Gap $w={2} /><T i="spell" /><T i="auto" on w={25} /><S />
          <T i="cut" dim w={25} /><T i="copy" dim /><T i="paste" /><T i="brush" dim /><S />
          <T i="undo" dim /><A /><T i="redo" dim /><A /><S />
          <Gap $w={2} /><T i="chart" /><T i="table" w={24} /><A /><T i="conn" /><S /><T i="grid" /><S />
          <Gap $w={2} /><T i="nav" /><T i="zoom" w={24} /><A /><S /><Gap $w={3} /><T i="help" /><Gap $w={4} /><Grip />
          <T i="gallery" w={25} /><A /><Gap $w={2} /><T i="master" /><A /><T i="layout" /><S /><Gap $w={2} /><T i="present" />
        </ToolRow>
        <ToolRow $h={31}>
          <Grip />
          <T i="props" /><S /><T i="lstyle" /><T i="lwidth" /><A /><Gap $w={10} />
          <Combo $w={83}>
            <ComboValue><LineSample /></ComboValue>
            <ComboBtn><Small i="chevDown" /></ComboBtn>
          </Combo>
          <Gap $w={9} />
          <SpinBox $w={68}>
            <ComboValue>0,00 см</ComboValue>
            <SpinBtns><Small i="chevUp" s={7} /><Small i="chevDown" s={7} /></SpinBtns>
          </SpinBox>
          <Gap $w={6} /><T i="lcolor" /><A /><Gap $w={3} /><S /><T i="fill" /><Gap $w={9} />
          <Combo $w={76}>
            <ComboValue>Цвет</ComboValue>
            <ComboBtn><Small i="chevDown" /></ComboBtn>
          </Combo>
          <Gap $w={2} />
          <Combo $w={116}>
            <ComboValue><Swatch />Танго: Голубой</ComboValue>
            <ComboBtn><Small i="chevDown" /></ComboBtn>
          </Combo>
          <Gap $w={6} /><T i="shadow" /><Gap $w={2} /><S />
          <T i="rotate" /><T i="align" /><A /><T i="arrange" /><A /><S /><Gap $w={2} /><T i="diamonds" dim />
        </ToolRow>
      </Chrome>

      <Main>
        <SlidesPanel>
          <PanelHead>Слайды<CloseX>✕</CloseX></PanelHead>
          <SlideList>
            <SlideCard>
              <SlideNum>1</SlideNum>
              <SlidePreview />
            </SlideCard>
          </SlideList>
        </SlidesPanel>
        <Splitter $w={10}><SplitDots /></Splitter>
        <Workspace>
          <TabBar>
            <Tab $w={110} $on>Режим рисования</Tab>
            <Tab $w={102}>Режим структуры</Tab>
            <Tab $w={77}>Примечания</Tab>
            <Tab $w={89}>Режим тезисов</Tab>
            <Tab $w={131}>Сортировщик слайдов</Tab>
          </TabBar>
          <WorkRow>
            <Canvas>
              <Slide>
                <TitleHolder>Для добавления заголовка<br />щёлкните мышью</TitleHolder>
                <BodyHolder>Для добавления текста щёлкните мышью</BodyHolder>
              </Slide>
            </Canvas>
            <VScroll>
              <Small i="chevUp" />
              <VThumb />
              <VBottom><Small i="chevDown" /></VBottom>
            </VScroll>
          </WorkRow>
          <HScrollRow>
            <Small i="chevLeft" />
            <HThumb />
            <HRight><Small i="chevRight" /></HRight>
          </HScrollRow>
        </Workspace>
        <Splitter $w={5}><SplitDots /></Splitter>
        <Gap $w={4} />
        <TaskPanel>
          <TaskHead>Фоны страниц<CloseX>✕</CloseX></TaskHead>
          <SectionHead><MinusBox />Используемые в данной презентации</SectionHead>
          <SectionBody $h={61}>
            <UsedRow>
              <Mini $h={56} $bg="#fff" $edge="#b0b0b0">
                <SmallTitle>{"Для первого текста щёлкните\nщёлкните мышью"}</SmallTitle>
                <MiniList>
                  Для первого текста щёлкните мышью<br />
                  • Второй уровень структуры<br />
                  &nbsp;&nbsp;• Третий уровень структуры<br />
                  &nbsp;&nbsp;&nbsp;&nbsp;• Четвёртый уровень<br />
                  &nbsp;&nbsp;&nbsp;&nbsp;&nbsp;&nbsp;• Пятый уровень
                </MiniList>
              </Mini>
            </UsedRow>
          </SectionBody>
          <SectionHead><MinusBox />Последние</SectionHead>
          <SectionBody $h={61} />
          <SectionHead><MinusBox />Доступные</SectionHead>
          <ThumbGrid>
            <Mini $h={56} $bg="#fff" $edge="#a8a8a8">
              <SmallTitle>{"Для добавления заголовка\nщёлкните мышью"}</SmallTitle>
              <MiniBody>Для добавления текста щёлкните мышью</MiniBody>
            </Mini>
            <Mini $bg={themes.green} $edge="#5aa843" $color="#174d12">
              <MiniTitle>Click to add title</MiniTitle>
              <MiniBody>Click to add text</MiniBody>
            </Mini>
            <Mini $bg={themes.red} $edge="#b4301c" $color="#5a1208">
              <MiniTitle>Click to add title</MiniTitle>
              <MiniBody>Click to add text</MiniBody>
            </Mini>
            <Mini $bg={themes.yellow} $edge="#d2b04a" $color="#6a5208">
              <MiniTitle $bg="#dea91f" $color="#f6e180">Click to add title</MiniTitle>
              <MiniBody>Click to add text</MiniBody>
            </Mini>
            <Mini $bg="#fff" $edge="#b0b0b0">
              <MiniTitle $bg="linear-gradient(90deg,#2f62b5,#4a8be0)" $w="76%" $left $color="#12284d">Click to add title</MiniTitle>
              <MiniBody>Click to add text</MiniBody>
            </Mini>
            <Mini $bg="linear-gradient(90deg,#e3ecf6 0 8px,#fff 9px)" $edge="#a8a8a8">
              <MiniTitle>Click to add title</MiniTitle>
              <MiniBody>Click to add text</MiniBody>
            </Mini>
            <Mini $h={55} $bg={themes.grey} $frame="2px solid #4c4c4c">
              <MiniMark $c="#8fcfc0" $w={7} $h={12} $r={5} $t={0} />
              <MiniTitle $bg="#aee083" $left $color="#1f3d10" $h={7}>Click to add title</MiniTitle>
              <MiniBody>Click to add text</MiniBody>
            </Mini>
            <Mini $bg="linear-gradient(#fff 50%,#efefef)" $edge="#a8a8a8">
              <MiniTitle $bg="#3ea83e" $color="#0d3a0d">Click to add title</MiniTitle>
              <MiniBody>Click to add text</MiniBody>
            </Mini>
            <Mini $bg={themes.blue} $edge="#4f7fb8" $color="#0e2a52">
              <MiniTitle>Click to add title</MiniTitle>
              <MiniBody>Click to add text</MiniBody>
            </Mini>
            <Mini $bg={themes.orange} $frame="2px solid #fff4e0" $ring="#a77a42" $color="#5a3a06">
              <MiniTitle>Click to add title</MiniTitle>
              <MiniBody>Click to add text</MiniBody>
            </Mini>
            <Mini $bg={themes.tan} $edge="#c4a878" $color="#4a3416">
              <MiniMark $c="#a8362c" $w={5} $h={7} $r={2} $t={0} />
              <MiniMark $c="#222" $w={6} $h={4} $l={0} $b={1} />
              <MiniTitle $bg="#c2a06a">Click to add title</MiniTitle>
              <MiniBody>Click to add text</MiniBody>
            </Mini>
          </ThumbGrid>
        </TaskPanel>
        <SideTabs>
          <SideTop><Svg s={16} vb={20}>{P.menu}</Svg></SideTop>
          <Side i="wrench" />
          <Side i="chartside" on />
          <Side i="starside" />
          <Side i="nav2" />
          <Side i="propside" />
          <Side i="galside" />
          <Side i="navside" />
        </SideTabs>
      </Main>

      <BottomBar>
        <Grip />
        <T i="select" on /><S /><Gap $w={3} />
        <T i="line" w={25} /><T i="arrow" w={25} /><T i="rect" w={25} /><T i="ellipse" w={25} />
        <Tool $w={25}><BigT>T</BigT></Tool><S />
        <T i="pen" /><A /><T i="connector" /><A /><T i="diamond" /><A /><T i="smile" /><A />
        <T i="dbl" /><A /><T i="flow" /><A /><T i="callout" /><A /><T i="star" /><A /><Gap $w={3} /><S />
        <T i="points" /><T i="glue" /><S />
        <T i="fontwork" /><T i="fromfile" w={24} /><T i="gal2" /><Gap $w={1} /><S /><T i="extrude" dim />
      </BottomBar>
      <StatusBar>
        <StatusCell $w={490} />
        <StatusCell $w={210}><Status i="posIcon" />30,82 / 7,10</StatusCell>
        <StatusCell $w={203} $pad={4}><Status i="sizeIcon" />0,00 x 0,00<Gap $w={2} /><Svg s={20} vb={20}><text x="0" y="15" fontSize="13" fontStyle="italic" fill="#fff" stroke="#555" strokeWidth=".7" style={txt}>SA</text></Svg></StatusCell>
        <StatusCell $w={22} $c><Status i="checkDoc" /></StatusCell>
        <StatusCell $w={29} />
        <StatusCell $w={73}>Слайд 1 / 1</StatusCell>
        <StatusCell $w={360}>Обычный</StatusCell>
        <StatusCell $w={22} $c><Status i="move" /></StatusCell>
        <StatusCell $w={143} $c>
          <ZoomSign>–</ZoomSign>
          <ZoomTrack><ZoomKnob /><ZoomTick /></ZoomTrack>
          <ZoomSign>+</ZoomSign>
        </StatusCell>
        <StatusCell $w={48} $c $line={false}>85 %</StatusCell>
      </StatusBar>
    </Window>
  );
}
